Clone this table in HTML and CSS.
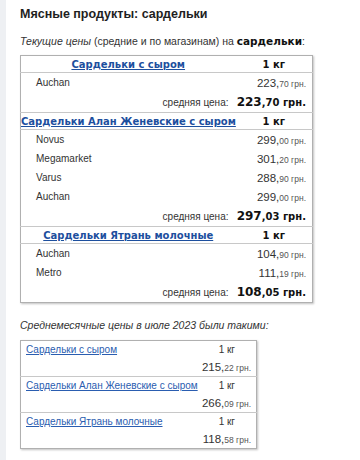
FILE: index.html
```html
<!DOCTYPE html>
<html lang="ru">
<head>
<meta charset="utf-8">
<link rel="stylesheet" href="styles.css">
</head>
<body>
<div class="page">
  <h1 class="title">Мясные продукты: сардельки</h1>
  <p class="intro"><i>Текущие цены</i> (средние и по магазинам) на <b>сардельки</b>:</p>

  <table class="cur">
    <colgroup><col class="c1"><col class="c2"></colgroup>
    <tr class="head"><td class="hname"><a href="#">Сардельки с сыром</a></td><td class="hunit">1 кг</td></tr>
    <tr class="item"><td class="store">Auchan</td><td class="price"><span class="big">223,</span>70 грн.</td></tr>
    <tr class="avg"><td class="avgl">средняя цена:</td><td class="avgp"><span class="big">223</span>,70 грн.</td></tr>

    <tr class="head sep"><td class="hname"><a href="#">Сардельки Алан Женевские с сыром</a></td><td class="hunit">1 кг</td></tr>
    <tr class="item"><td class="store">Novus</td><td class="price"><span class="big">299,</span>00 грн.</td></tr>
    <tr class="item"><td class="store">Megamarket</td><td class="price"><span class="big">301,</span>20 грн.</td></tr>
    <tr class="item"><td class="store">Varus</td><td class="price"><span class="big">288,</span>90 грн.</td></tr>
    <tr class="item"><td class="store">Auchan</td><td class="price"><span class="big">299,</span>00 грн.</td></tr>
    <tr class="avg"><td class="avgl">средняя цена:</td><td class="avgp"><span class="big">297</span>,03 грн.</td></tr>

    <tr class="head sep"><td class="hname"><a href="#">Сардельки Ятрань молочные</a></td><td class="hunit">1 кг</td></tr>
    <tr class="item"><td class="store">Auchan</td><td class="price"><span class="big">104,</span>90 грн.</td></tr>
    <tr class="item"><td class="store">Metro</td><td class="price"><span class="big">111,</span>19 грн.</td></tr>
    <tr class="avg"><td class="avgl">средняя цена:</td><td class="avgp"><span class="big">108</span>,05 грн.</td></tr>
  </table>

  <p class="month">Среднемесячные цены в июле 2023 были такими:</p>

  <table class="hist">
    <tr class="top"><td class="mname" rowspan="2"><a href="#">Сардельки с сыром</a></td><td class="munit">1 кг</td></tr>
    <tr class="bot"><td class="mprice"><span class="big">215,</span>22 грн.</td></tr>
    <tr class="top sep"><td class="mname" rowspan="2"><a href="#">Сардельки Алан Женевские с сыром</a></td><td class="munit">1 кг</td></tr>
    <tr class="bot"><td class="mprice"><span class="big">266,</span>09 грн.</td></tr>
    <tr class="top sep"><td class="mname" rowspan="2"><a href="#">Сардельки Ятрань молочные</a></td><td class="munit">1 кг</td></tr>
    <tr class="bot"><td class="mprice"><span class="big">118,</span>58 грн.</td></tr>
  </table>
</div>
</body>
</html>
```

FILE: styles.css
```css
html, body {
  margin: 0;
  padding: 0;
  background: #ffffff;
}
body {
  font-family: "Liberation Sans", Arial, sans-serif;
  color: #222;
  border-left: 6px solid #eef0f3;
  min-height: 460px;
  box-sizing: border-box;
}
.page {
  padding: 5px 0 0 14px;
}
.title {
  font-size: 12.5px;
  font-weight: bold;
  margin: 0;
  line-height: 18px;
  color: #1e1e1e;
  white-space: nowrap;
}
.intro {
  margin: 11px 0 0 0;
  font-size: 10.5px;
  line-height: 14px;
  color: #333;
  white-space: nowrap;
}
.intro b {
  font-family: "DejaVu Sans", Verdana, sans-serif;
  font-size: 10.5px;
  color: #111;
}
table {
  border-collapse: collapse;
}
td {
  white-space: nowrap;
  padding: 0;
}
.cur {
  margin-top: 7px;
  width: 292px;
  border: 1px solid #b0b0b0;
  box-shadow: 1px 1px 2px rgba(0,0,0,0.25);
  table-layout: fixed;
}
.c1 { width: 215px; }
.c2 { width: 77px; }
.head td {
  height: 16px;
  border-bottom: 1px solid #c8c8c8;
  font-family: "DejaVu Sans", Verdana, sans-serif;
  font-weight: bold;
  font-size: 10px;
}
.head.sep td {
  border-top: 1px solid #c8c8c8;
}
.hname {
  text-align: center;
}
.hname a {
  color: #1d4f9e;
  text-decoration: underline;
}
.hunit {
  text-align: center;
  color: #111;
}
.item td {
  height: 19px;
  font-size: 10px;
  color: #333;
}
.item td.store {
  padding-left: 15px;
}
.item td.price {
  text-align: right;
  padding-right: 6px;
  font-size: 8.5px;
  color: #555;
}
.price .big {
  font-size: 11.5px;
  color: #333;
}
.avg td {
  height: 20px;
}
.avg td.avgl {
  text-align: right;
  padding-right: 7px;
  font-size: 10px;
  color: #333;
}
.avg td.avgp {
  text-align: right;
  padding-right: 6px;
  font-family: "DejaVu Sans", Verdana, sans-serif;
  font-weight: bold;
  font-size: 10px;
  color: #111;
}
.avgp .big {
  font-size: 12px;
}
.month {
  margin: 15px 0 0 0;
  font-size: 10.5px;
  font-style: italic;
  line-height: 14px;
  color: #333;
}
.hist {
  margin-top: 8px;
  width: 237px;
  border: 1px solid #b0b0b0;
  box-shadow: 1px 1px 2px rgba(0,0,0,0.25);
}
.hist td {
  font-size: 10px;
}
.top td {
  height: 17px;
}
.top.sep td {
  border-top: 1px solid #c8c8c8;
}
.hist td.mname {
  vertical-align: top;
  padding: 3px 0 0 5px;
}
.mname a {
  color: #2a5db0;
  text-decoration: underline;
}
.hist td.munit {
  width: 60px;
  text-align: center;
  color: #333;
}
.bot td {
  height: 18px;
}
.hist td.mprice {
  text-align: right;
  padding-right: 5px;
  font-size: 8.5px;
  color: #555;
}
.mprice .big {
  font-size: 11.5px;
  color: #333;
}
```
